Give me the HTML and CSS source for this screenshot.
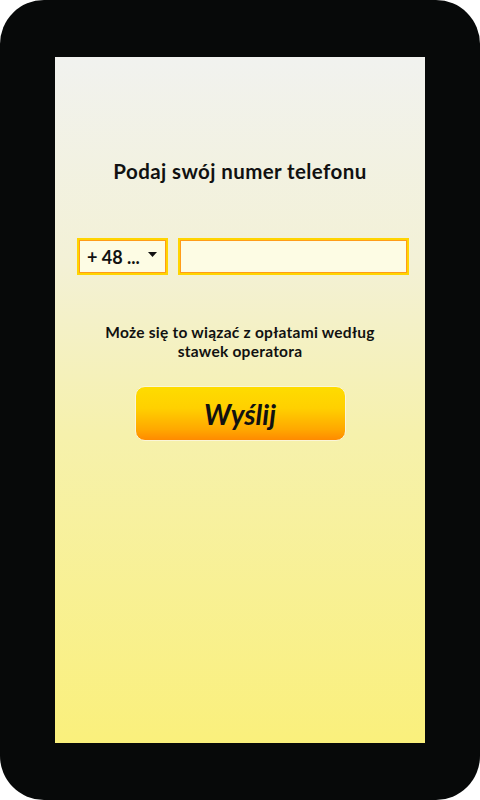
FILE: index.html
```html
<!DOCTYPE html>
<html lang="pl">
<head>
<meta charset="utf-8">
<title>Podaj swój numer telefonu</title>
<link rel="stylesheet" href="styles.css">
</head>
<body>
<div class="phone">
  <div class="screen">
    <h1 class="title">Podaj swój numer telefonu</h1>
    <div class="row">
      <div class="select">
        <span class="code">+ 48 ...</span>
        <svg class="caret" width="9" height="5" viewBox="0 0 9 5"><path d="M0 0H9L4.5 5Z" fill="#111"/></svg>
      </div>
      <div class="input"></div>
    </div>
    <p class="note">Może się to wiązać z opłatami według<br>stawek operatora</p>
    <button class="send">Wyślij</button>
  </div>
</div>
</body>
</html>
```
FILE: styles.css
```css
html, body {
  margin: 0;
  padding: 0;
  background: #ffffff;
}
body {
  width: 480px;
  height: 800px;
  font-family: Lato, "Open Sans", "Liberation Sans", sans-serif;
}
.phone {
  width: 480px;
  height: 800px;
  box-sizing: border-box;
  background: #070909;
  border-radius: 44px;
  padding: 57px 55px 57px 55px;
}
.screen {
  height: 686px;
  background: linear-gradient(180deg, #f1f2ef 0%, #f3f1d6 30%, #f6f1ac 55%, #faf07c 100%);
  display: flex;
  flex-direction: column;
  align-items: center;
}
.title {
  margin: 102px 0 0 0;
  font-size: 20.5px;
  line-height: 24px;
  letter-spacing: 0.4px;
  font-weight: 700;
  color: #111;
}
.row {
  display: flex;
  gap: 10px;
  margin-top: 55px;
  align-self: stretch;
  padding: 0 16px 0 22px;
}
.select, .input {
  height: 37px;
  box-sizing: border-box;
  border: 2px solid #ffd400;
  box-shadow: inset 0 0 0 1px #ff9c1a;
  background: #fdfce4;
}
.select {
  width: 91px;
  display: flex;
  align-items: center;
  justify-content: space-between;
  padding: 0 9px 0 8px;
}
.code {
  font-size: 18px;
  font-weight: 700;
  color: #111;
}
.caret {
  margin-top: -5px;
}
.input {
  flex: 1;
}
.note {
  margin: 48px 0 0 0;
  font-size: 15.5px;
  line-height: 19px;
  letter-spacing: 0.25px;
  font-weight: 700;
  color: #111;
  text-align: center;
}
.send {
  margin-top: 25px;
  width: 211px;
  height: 55px;
  box-sizing: border-box;
  border: 1px solid #fbf6d8;
  border-radius: 10px;
  background: linear-gradient(180deg, #fedc00 0%, #ffd000 40%, #ffa800 80%, #ff8a00 100%);
  font-family: Lato, "Open Sans", "Liberation Sans", sans-serif;
  font-size: 28px;
  font-weight: 700;
  font-style: italic;
  color: #111;
  padding: 0;
}
```
